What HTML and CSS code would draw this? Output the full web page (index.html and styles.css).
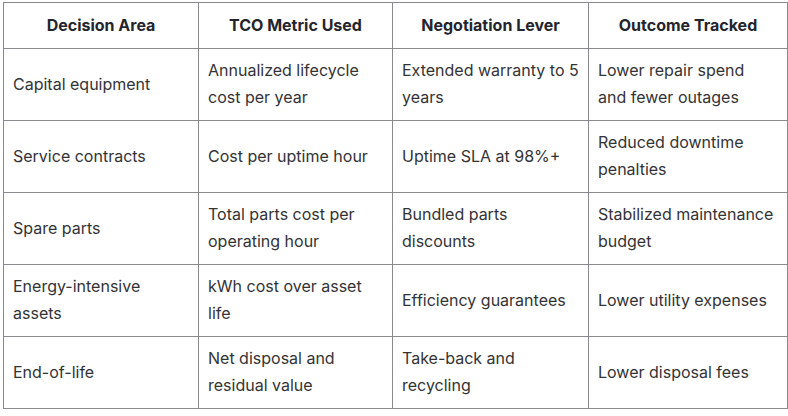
FILE: index.html
```html
<!DOCTYPE html>
<html lang="en">
<head>
<meta charset="utf-8">
<title>TCO Table</title>
<link rel="stylesheet" href="styles.css">
</head>
<body>
<table class="tco">
  <colgroup>
    <col class="c1"><col class="c2"><col class="c3"><col class="c4">
  </colgroup>
  <thead>
    <tr>
      <th>Decision Area</th>
      <th>TCO Metric Used</th>
      <th>Negotiation Lever</th>
      <th>Outcome Tracked</th>
    </tr>
  </thead>
  <tbody>
    <tr>
      <td>Capital equipment</td>
      <td>Annualized lifecycle cost per year</td>
      <td>Extended warranty to 5 years</td>
      <td>Lower repair spend and fewer outages</td>
    </tr>
    <tr>
      <td>Service contracts</td>
      <td>Cost per uptime hour</td>
      <td>Uptime SLA at 98%+</td>
      <td>Reduced downtime penalties</td>
    </tr>
    <tr>
      <td>Spare parts</td>
      <td>Total parts cost per operating hour</td>
      <td>Bundled parts discounts</td>
      <td>Stabilized maintenance budget</td>
    </tr>
    <tr>
      <td>Energy-intensive assets</td>
      <td>kWh cost over asset life</td>
      <td>Efficiency guarantees</td>
      <td>Lower utility expenses</td>
    </tr>
    <tr>
      <td>End-of-life</td>
      <td>Net disposal and residual value</td>
      <td>Take-back and recycling</td>
      <td>Lower disposal fees</td>
    </tr>
  </tbody>
</table>
</body>
</html>
```

FILE: styles.css
```css
html, body {
  margin: 0;
  background: #ffffff;
}
body {
  padding: 2px 0 0 3px;
  font-family: Inter, "Noto Sans", "Liberation Sans", sans-serif;
  font-size: 16px;
  color: #333336;
}
.tco {
  border-collapse: collapse;
  table-layout: fixed;
  width: 784px;
}
.c1 { width: 195px; }
.c2 { width: 194px; }
.c3 { width: 196px; }
.c4 { width: 199px; }
.tco th,
.tco td {
  border: 1px solid #8a8a8e;
  padding: 9px 9px 9px 9px;
  line-height: 27px;
  vertical-align: middle;
}
.tco th {
  font-weight: 700;
  text-align: center;
  color: #24242c;
}
.tco td {
  text-align: left;
  height: 54px;
  padding: 8px 9px 9px 9px;
}
.tco td:last-child {
  padding-right: 12px;
}
```
